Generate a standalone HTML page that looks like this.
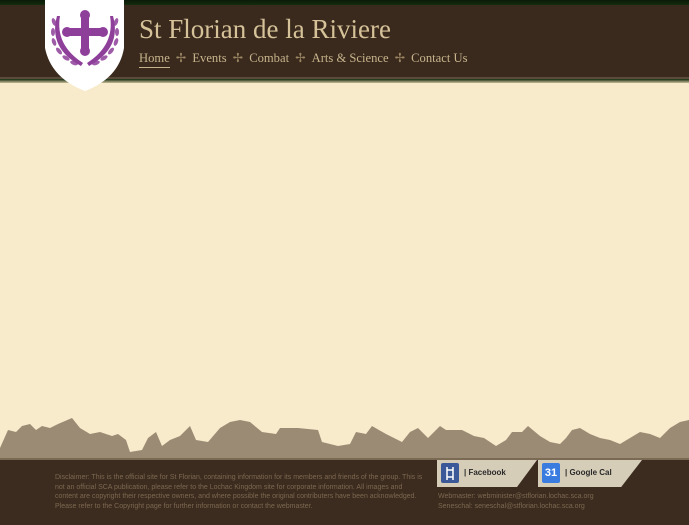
<!DOCTYPE html>
<html><head><style>
body{margin:0;width:689px;height:525px;overflow:hidden;background:#f8ebcb;font-family:"Liberation Sans",sans-serif;position:relative}
.top{position:absolute;left:0;top:0;width:689px;height:6px;background:linear-gradient(#0a1a08,#16300f)}
.hdr{position:absolute;left:0;top:5px;width:689px;height:72px;background:#3a2a1d;border-bottom:2px solid #5a4a3a}
.hb{position:absolute;left:0;top:79px;width:689px;height:4px;background:linear-gradient(#102a0c,#c9bb98)}
.title{position:absolute;left:139px;top:14px;font-family:"Liberation Serif",serif;font-size:27px;color:#d6c299}
.nav{position:absolute;left:139px;top:50px;font-family:"Liberation Serif",serif;font-size:12.6px;color:#c7b48c;white-space:nowrap}
.nav .c{color:#9a8462;margin:0 6px}
.home{border-bottom:1px solid #c7b48c;padding-bottom:2px}
.foot{position:absolute;left:0;top:460px;width:689px;height:65px;background:#3b2c1f}
.ft{position:absolute;left:55px;top:473px;width:372px;font-size:7px;line-height:9.6px;color:#7d6850}
.ft2{position:absolute;left:438px;top:492px;font-size:7px;line-height:9.6px;color:#7d6850}
.tab{position:absolute;top:460px;height:27px;background:#d6cdb9;clip-path:polygon(0 0,100% 0,80% 100%,0 100%)}
.tab b{position:absolute;top:8px;font-size:8px;color:#2a2a2a}
.ic{position:absolute;left:4px;top:3px;width:18px;height:20px;border-radius:2px;color:#fff;font-size:11px;font-weight:bold;text-align:center;line-height:20px}
</style></head><body>
<div class="top"></div><div class="hdr"></div><div class="hb"></div>
<svg style="position:absolute;left:45px;top:0" width="80" height="92" viewBox="0 0 80 92">
<path d="M0 0H79V48Q74 78 40 91Q6 78 0 48Z" fill="#fff"/>
<g fill="#8e3f9a">
<rect x="36" y="14" width="8" height="38"/><rect x="21" y="28" width="38" height="8"/>
<circle cx="40" cy="15" r="5"/><circle cx="40" cy="51" r="5"/><circle cx="22" cy="32" r="5"/><circle cx="58" cy="32" r="5"/>
<path d="M12 16Q3 48 36 66L38 63Q10 45 15 16Z"/><path d="M68 16Q77 48 44 66L42 63Q70 45 65 16Z"/>
<g opacity=".85"><ellipse cx="9" cy="22" rx="2" ry="4" transform="rotate(-20 9 22)"/><ellipse cx="8" cy="32" rx="2" ry="4"/><ellipse cx="9" cy="42" rx="2" ry="4" transform="rotate(-20 9 42)"/><ellipse cx="14" cy="51" rx="2" ry="4" transform="rotate(-40 14 51)"/><ellipse cx="21" cy="58" rx="2" ry="4" transform="rotate(-60 21 58)"/><ellipse cx="29" cy="63" rx="2" ry="4" transform="rotate(-70 29 63)"/>
<ellipse cx="71" cy="22" rx="2" ry="4" transform="rotate(20 71 22)"/><ellipse cx="72" cy="32" rx="2" ry="4"/><ellipse cx="71" cy="42" rx="2" ry="4" transform="rotate(20 71 42)"/><ellipse cx="66" cy="51" rx="2" ry="4" transform="rotate(40 66 51)"/><ellipse cx="59" cy="58" rx="2" ry="4" transform="rotate(60 59 58)"/><ellipse cx="51" cy="63" rx="2" ry="4" transform="rotate(70 51 63)"/></g>
</g></svg>
<div class="title">St Florian de la Riviere</div>
<div class="nav"><span class="home">Home</span><span class="c">✢</span><span>Events</span><span class="c">✢</span><span>Combat</span><span class="c">✢</span><span>Arts &amp; Science</span><span class="c">✢</span><span>Contact Us</span></div>
<svg style="position:absolute;left:0;top:418px" width="689" height="44" viewBox="0 0 689 44">
<path fill="#9b8b74" d="M0 44V30L8 12 16 14 22 8 30 6 36 12 42 8 50 10 58 6 72 0 80 10 90 16 100 14 112 18 118 16 126 22 130 34 142 32 148 20 156 14 162 28 170 22 180 18 190 8 196 22 208 24 220 10 230 4 240 2 250 4 262 14 276 16 280 10 298 10 318 12 322 24 338 28 350 26 356 14 366 16 372 8 386 16 394 20 402 24 410 14 418 10 428 20 440 8 446 12 462 12 474 18 484 20 496 28 506 22 512 14 522 14 528 8 540 18 550 24 560 26 566 20 572 12 580 10 590 16 600 20 610 22 620 26 630 20 640 14 650 16 660 20 670 10 680 4 689 2V44Z"/>
<rect y="40" width="689" height="4" fill="#7a6a54"/></svg>
<div class="foot"></div>
<div class="ft">Disclaimer: This is the official site for St Florian, containing information for its members and friends of the group. This is not an official SCA publication, please refer to the Lochac Kingdom site for corporate information. All images and content are copyright their respective owners, and where possible the original contributers have been acknowledged. Please refer to the Copyright page for further information or contact the webmaster.</div>
<div class="ft2">Webmaster: webminister@stflorian.lochac.sca.org<br>Seneschal: seneschal@stflorian.lochac.sca.org</div>
<div class="tab" style="left:437px;width:100px"><div class="ic" style="background:#3b5998"><svg width="18" height="20"><path d="M6 4V17M12 4V17M6 7H12M6 14H12" stroke="#fff" stroke-width="1.5" fill="none"/></svg></div><b style="left:27px">| Facebook</b></div>
<div class="tab" style="left:538px;width:104px"><div class="ic" style="background:#3a7be0">31</div><b style="left:27px">| Google Cal</b></div>
</body></html>
